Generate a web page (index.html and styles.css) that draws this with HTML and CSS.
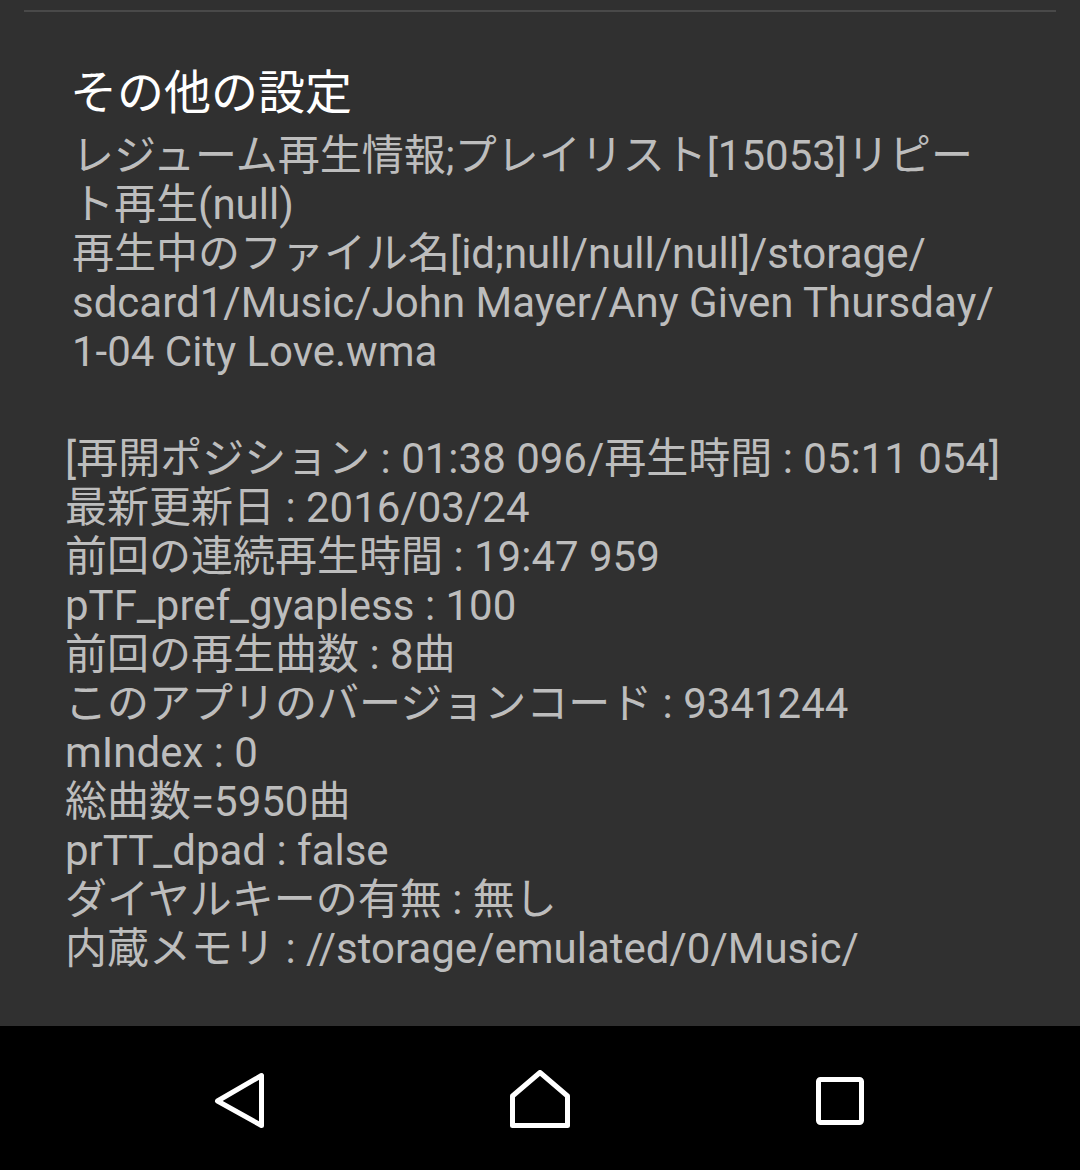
FILE: index.html
```html
<!DOCTYPE html>
<html lang="ja">
<head>
<meta charset="utf-8">
<link rel="stylesheet" href="styles.css">
</head>
<body>
<div class="screen">
  <div class="content">
    <div class="divider"></div>
    <h1 class="title">その他の設定</h1>
    <p class="info first">レジューム再生情報;プレイリスト[15053]リピー<br>ト再生(null)<br>再生中のファイル名[id;null/null/null]/storage/<br>sdcard1/Music/John Mayer/Any Given Thursday/<br>1-04 City Love.wma</p>
    <p class="info second">[再開ポジション : 01:38 096/再生時間 : 05:11 054]<br>最新更新日 : 2016/03/24<br>前回の連続再生時間 : 19:47 959<br>pTF_pref_gyapless : 100<br>前回の再生曲数 : 8曲<br>このアプリのバージョンコード : 9341244<br>mIndex : 0<br>総曲数=5950曲<br>prTT_dpad : false<br>ダイヤルキーの有無 : 無し<br>内蔵メモリ : //storage/emulated/0/Music/</p>
  </div>
  <nav class="navbar">
    <svg class="navicon" viewBox="0 0 60 60" width="60" height="60"><polygon points="7.5,31 51.5,5.5 51.5,55.5" /></svg>
    <svg class="navicon" viewBox="0 0 60 60" width="60" height="60"><path d="M2.5 26 L30 2.5 L57.5 26 V55.5 H2.5 Z" /></svg>
    <svg class="navicon" viewBox="0 0 60 60" width="60" height="60"><rect x="8.5" y="9.5" width="43" height="43" rx="2" /></svg>
  </nav>
</div>
</body>
</html>
```
FILE: styles.css
```css
html, body {
  margin: 0;
  padding: 0;
  background: #303030;
}
.screen {
  width: 1080px;
  height: 1170px;
  display: flex;
  flex-direction: column;
  overflow: hidden;
  font-family: Roboto, "Noto Sans CJK JP", sans-serif;
}
.content {
  height: 1026px;
  background: #303030;
  display: flex;
  flex-direction: column;
}
.divider {
  margin: 10px 24px 0;
  height: 2px;
  background: #494949;
}
.title {
  margin: 49px 0 0 70px;
  font-size: 47px;
  line-height: 56px;
  font-weight: 400;
  color: #ffffff;
  font-family: "Noto Sans CJK JP", sans-serif;
}
.info {
  margin: 0;
  font-size: 42px;
  line-height: 49px;
  color: #bdbdbd;
  white-space: nowrap;
}
.first {
  margin-top: 14px;
  padding-left: 72px;
}
.second {
  margin-top: 58px;
  padding-left: 65px;
}
.navbar {
  height: 144px;
  background: #000000;
  display: flex;
  justify-content: center;
  align-items: center;
  gap: 240px;
  padding-top: 4px;
  box-sizing: border-box;
}
.navicon {
  display: block;
  fill: none;
  stroke: #ffffff;
  stroke-width: 5;
  stroke-linejoin: round;
  stroke-linecap: round;
}
```
